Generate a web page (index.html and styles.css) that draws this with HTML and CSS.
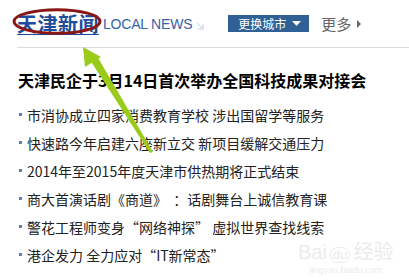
FILE: index.html
```html
<!DOCTYPE html>
<html lang="zh-CN">
<head>
<meta charset="utf-8">
<title>天津新闻</title>
<link rel="stylesheet" href="styles.css">
</head>
<body>
<div class="page">
  <div class="header">
    <a class="title" href="#">天津新闻</a>
    <span class="local">LOCAL NEWS</span>
    <svg class="corner" width="8" height="8" viewBox="0 0 8 8"><path d="M1 1 L7 7 M7 2 L7 7 L2 7" fill="none" stroke="#c8ccd4" stroke-width="1"/></svg>
    <span class="city-btn">更换城市<svg width="9" height="5" viewBox="0 0 9 5"><path d="M0 0 H9 L4.5 5 Z" fill="#fff"/></svg></span>
    <span class="more">更多<svg width="4" height="8" viewBox="0 0 4 8"><path d="M0 0 L4 4 L0 8 Z" fill="#666"/></svg></span>
  </div>
  <h2 class="headline">天津民企于3月14日首次举办全国科技成果对接会</h2>
  <ul class="list">
    <li>市消协成立四家消费教育学校 涉出国留学等服务</li>
    <li>快速路今年启建六座新立交 新项目缓解交通压力</li>
    <li>2014年至2015年度天津市供热期将正式结束</li>
    <li>商大首演话剧《商道》  ：话剧舞台上诚信教育课</li>
    <li>警花工程师变身“网络神探” 虚拟世界查找线索</li>
    <li>港企发力 全力应对“IT新常态”</li>
  </ul>
  <svg class="overlay" width="409" height="280" viewBox="0 0 409 280">
    <ellipse cx="57" cy="21.5" rx="43" ry="11.8" fill="none" stroke="#8a1616" stroke-width="3"/>
    <path d="M90 60 L97 56 L153 152 L150 153 Z" fill="#99cc1a"/>
    <path d="M83 47 L101 57 L85 67 Z" fill="#99cc1a"/>
  </svg>
  <div class="watermark">
    <div class="wm-logo">Bai<span class="wm-du">du</span>经验</div>
    <div class="wm-url">jingyan.baidu.com</div>
  </div>
</div>
</body>
</html>
```
FILE: styles.css
```css
html, body {
  margin: 0;
  padding: 0;
  background: #fff;
}
body {
  font-family: "Liberation Sans", "Noto Sans CJK SC", sans-serif;
  color: #222;
}
.page {
  position: relative;
  width: 409px;
  height: 280px;
  overflow: hidden;
}
.header {
  display: flex;
  align-items: center;
  height: 47px;
  margin-left: 17px;
  border-bottom: 1px solid #dcdcdc;
}
.title {
  font-family: "Noto Sans CJK SC", sans-serif;
  font-size: 20px;
  font-weight: bold;
  line-height: 24px;
  color: #1e4d9b;
  text-decoration: underline;
  text-decoration-thickness: 1px;
  text-underline-offset: 2px;
  letter-spacing: 0.5px;
}
.local {
  margin-left: 4px;
  font-size: 14px;
  line-height: 16px;
  color: #3a60a8;
  letter-spacing: -0.2px;
}
.corner {
  margin-left: 4px;
  margin-top: 4px;
}
.city-btn {
  display: flex;
  align-items: center;
  gap: 6px;
  margin-left: 24px;
  height: 17px;
  padding: 0 8px 0 10px;
  background: #2f6197;
  color: #fff;
  font-family: "Noto Sans CJK SC", sans-serif;
  font-size: 12px;
  line-height: 17px;
}
.more {
  display: flex;
  align-items: center;
  gap: 6px;
  margin-left: 12px;
  font-family: "Noto Sans CJK SC", sans-serif;
  font-size: 15px;
  line-height: 18px;
  color: #666;
}
.headline {
  margin: 22px 0 0 18px;
  font-family: "Noto Sans CJK SC", sans-serif;
  font-size: 16px;
  font-weight: bold;
  line-height: 20px;
  color: #000;
}
.list {
  list-style: none;
  margin: 11px 0 0 0;
  padding: 0;
}
.list li {
  display: flex;
  align-items: center;
  height: 28px;
  font-family: "Noto Sans CJK SC", sans-serif;
  font-size: 14px;
  color: #222;
  white-space: pre;
}
.list li::before {
  content: "";
  width: 3px;
  height: 3px;
  margin: -2px 5px 0 19px;
  background: #5d7fb8;
  flex: none;
}
.overlay {
  position: absolute;
  left: 0;
  top: 0;
  pointer-events: none;
}
.watermark {
  position: absolute;
  left: 298px;
  top: 240px;
  color: #ebebeb;
  text-align: center;
}
.wm-logo {
  font-family: "Liberation Sans", "Noto Sans CJK SC", sans-serif;
  font-size: 20px;
  line-height: 24px;
}
.wm-du {
  display: inline-block;
  border: 1px solid #ebebeb;
  border-radius: 8px;
  font-size: 13px;
  line-height: 14px;
  padding: 0 2px;
  margin: 0 3px;
}
.wm-url {
  font-size: 9px;
  line-height: 12px;
}
```
